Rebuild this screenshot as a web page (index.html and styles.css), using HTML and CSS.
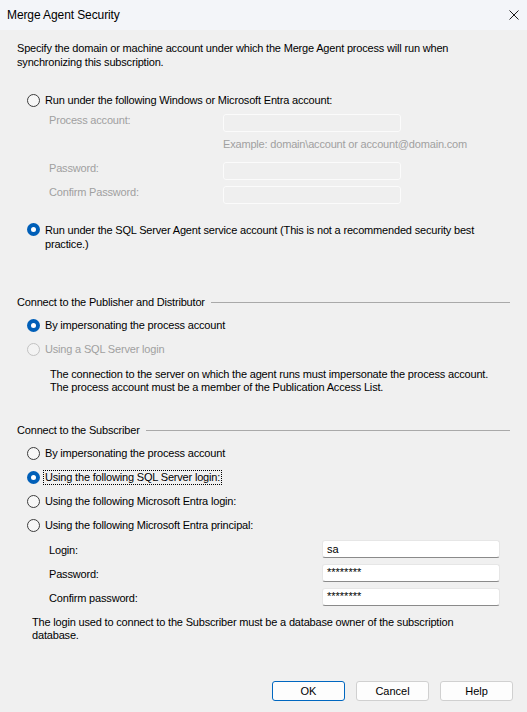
FILE: index.html
```html
<!DOCTYPE html>
<html>
<head>
<meta charset="utf-8">
<title>Merge Agent Security</title>
<link rel="stylesheet" href="styles.css">
</head>
<body>
<div class="window">
  <div class="titlebar">
    <span class="title">Merge Agent Security</span>
    <svg class="close" width="10" height="10" viewBox="0 0 10 10"><path d="M0.5 0.5 L9.5 9.5 M9.5 0.5 L0.5 9.5" stroke="#1a1a1a" stroke-width="1" fill="none"/></svg>
  </div>
  <div class="content">
    <p class="intro">Specify the domain or machine account under which the Merge Agent process will run when<br>synchronizing this subscription.</p>

    <div class="radio r-first"><span class="dot"></span><span class="lbl">Run under the following Windows or Microsoft Entra account:</span></div>

    <div class="field f-process disabled"><span class="flabel">Process account:</span><span class="box off"></span></div>
    <div class="example">Example: domain\account or account@domain.com</div>
    <div class="field f-pass disabled"><span class="flabel">Password:</span><span class="box off"></span></div>
    <div class="field f-confirm disabled"><span class="flabel">Confirm Password:</span><span class="box off"></span></div>

    <div class="radio wrap r-agent"><span class="dot on"></span><span class="lbl">Run under the SQL Server Agent service account (This is not a recommended security best<br>practice.)</span></div>

    <div class="group g-pub"><span>Connect to the Publisher and Distributor</span><span class="rule"></span></div>
    <div class="radio r-g"><span class="dot on"></span><span class="lbl">By impersonating the process account</span></div>
    <div class="radio r-next is-disabled"><span class="dot"></span><span class="lbl">Using a SQL Server login</span></div>
    <p class="explain">The connection to the server on which the agent runs must impersonate the process account.<br>The process account must be a member of the Publication Access List.</p>

    <div class="group g-sub"><span>Connect to the Subscriber</span><span class="rule"></span></div>
    <div class="radio r-g"><span class="dot"></span><span class="lbl">By impersonating the process account</span></div>
    <div class="radio r-next"><span class="dot on"></span><span class="lbl focus">Using the following SQL Server login:</span></div>
    <div class="radio r-next"><span class="dot"></span><span class="lbl">Using the following Microsoft Entra login:</span></div>
    <div class="radio r-next"><span class="dot"></span><span class="lbl">Using the following Microsoft Entra principal:</span></div>

    <div class="field2 f-login"><span class="flabel2">Login:</span><span class="box on">sa</span></div>
    <div class="field2 f-next"><span class="flabel2">Password:</span><span class="box on pw">********</span></div>
    <div class="field2 f-next"><span class="flabel2">Confirm password:</span><span class="box on pw">********</span></div>

    <p class="note">The login used to connect to the Subscriber must be a database owner of the subscription<br>database.</p>

    <div class="buttons">
      <button class="btn primary">OK</button>
      <button class="btn">Cancel</button>
      <button class="btn">Help</button>
    </div>
  </div>
</div>
</body>
</html>
```
FILE: styles.css
```css
html, body {
  margin: 0;
  padding: 0;
  background: #f0f0f0;
}
body {
  font-family: "Liberation Sans", Arial, sans-serif;
  font-size: 11px;
  letter-spacing: -0.18px;
  color: #000;
}
.window {
  width: 527px;
  height: 712px;
  overflow: hidden;
}
.titlebar {
  height: 30px;
  background: #f3f5f9;
  display: flex;
  align-items: center;
  justify-content: space-between;
  padding: 0 8px 0 7px;
}
.title {
  font-size: 12px;
  letter-spacing: -0.1px;
  color: #000;
}
.close {
  display: block;
}
.content {
  display: flex;
  flex-direction: column;
}
.intro {
  margin: 11px 0 0 17px;
  line-height: 14px;
}
.radio {
  display: flex;
  align-items: center;
  height: 16px;
  line-height: 16px;
  margin-left: 27px;
}
.radio.wrap {
  height: auto;
  align-items: flex-start;
  line-height: 14px;
}
.r-first { margin-top: 23px; }
.r-agent { margin-top: 19px; }
.r-g { margin-top: 8px; }
.r-next { margin-top: 8px; }
.dot {
  box-sizing: border-box;
  width: 13px;
  height: 13px;
  border-radius: 50%;
  border: 1px solid #3c3c3c;
  background: #f7f7f7;
  flex: none;
  margin-right: 5px;
  position: relative;
}
.dot.on {
  border: none;
  background: #005fb8;
}
.dot.on::after {
  content: "";
  position: absolute;
  left: 4px;
  top: 4px;
  width: 5px;
  height: 5px;
  border-radius: 50%;
  background: #fff;
}
.is-disabled .dot {
  border-color: #c2c2c2;
  background: #f3f3f3;
}
.is-disabled .lbl { color: #a0a0a0; }
.lbl.focus {
  outline: 1px dotted #000;
  outline-offset: 0;
  line-height: 13px;
  padding: 0 1px;
  margin-left: -1px;
}
.field {
  display: flex;
  align-items: flex-start;
  height: 18px;
  margin-left: 49px;
}
.field .flabel {
  width: 174px;
  line-height: 12px;
}
.disabled .flabel { color: #a0a0a0; }
.f-process { margin-top: 6px; }
.f-pass { margin-top: 11px; }
.f-confirm { margin-top: 6px; }
.example {
  margin: 5px 0 0 223px;
  line-height: 14px;
  color: #a0a0a0;
}
.box {
  box-sizing: border-box;
  height: 18px;
  width: 178px;
  display: block;
  border-radius: 3px;
}
.box.off {
  background: #efefef;
  border: 1px solid #fbfbfb;
}
.box.on {
  background: #fff;
  border: 1px solid #e6e6e6;
  border-bottom: 1px solid #8a8a8a;
  padding: 0 4px;
  line-height: 16px;
  letter-spacing: 0;
}
.box.pw {
  line-height: 14px;
}
.group {
  display: flex;
  align-items: center;
  margin-left: 17px;
  margin-right: 17px;
  line-height: 14px;
}
.group .rule {
  flex: 1;
  height: 1px;
  background: #a9a9a9;
  margin-left: 6px;
}
.g-pub { margin-top: 44px; }
.g-sub { margin-top: 29px; }
.explain {
  margin: 11px 0 0 50px;
  line-height: 13px;
}
.field2 {
  display: flex;
  align-items: center;
  height: 18px;
  margin-left: 49px;
}
.field2 .flabel2 {
  width: 273px;
  line-height: 14px;
  padding-top: 2px;
}
.f-login { margin-top: 7px; }
.f-next { margin-top: 6px; }
.note {
  margin: 10px 0 0 32px;
  line-height: 13px;
}
.buttons {
  display: flex;
  justify-content: flex-end;
  gap: 11px;
  margin: 39px 14px 0 0;
}
.btn {
  box-sizing: border-box;
  width: 73px;
  height: 20px;
  font-family: "Liberation Sans", Arial, sans-serif;
  font-size: 11px;
  color: #000;
  background: #fdfdfd;
  border: 1px solid #d0d0d0;
  border-radius: 3px;
  padding: 0;
}
.btn.primary {
  border-color: #0067c0;
}
```
